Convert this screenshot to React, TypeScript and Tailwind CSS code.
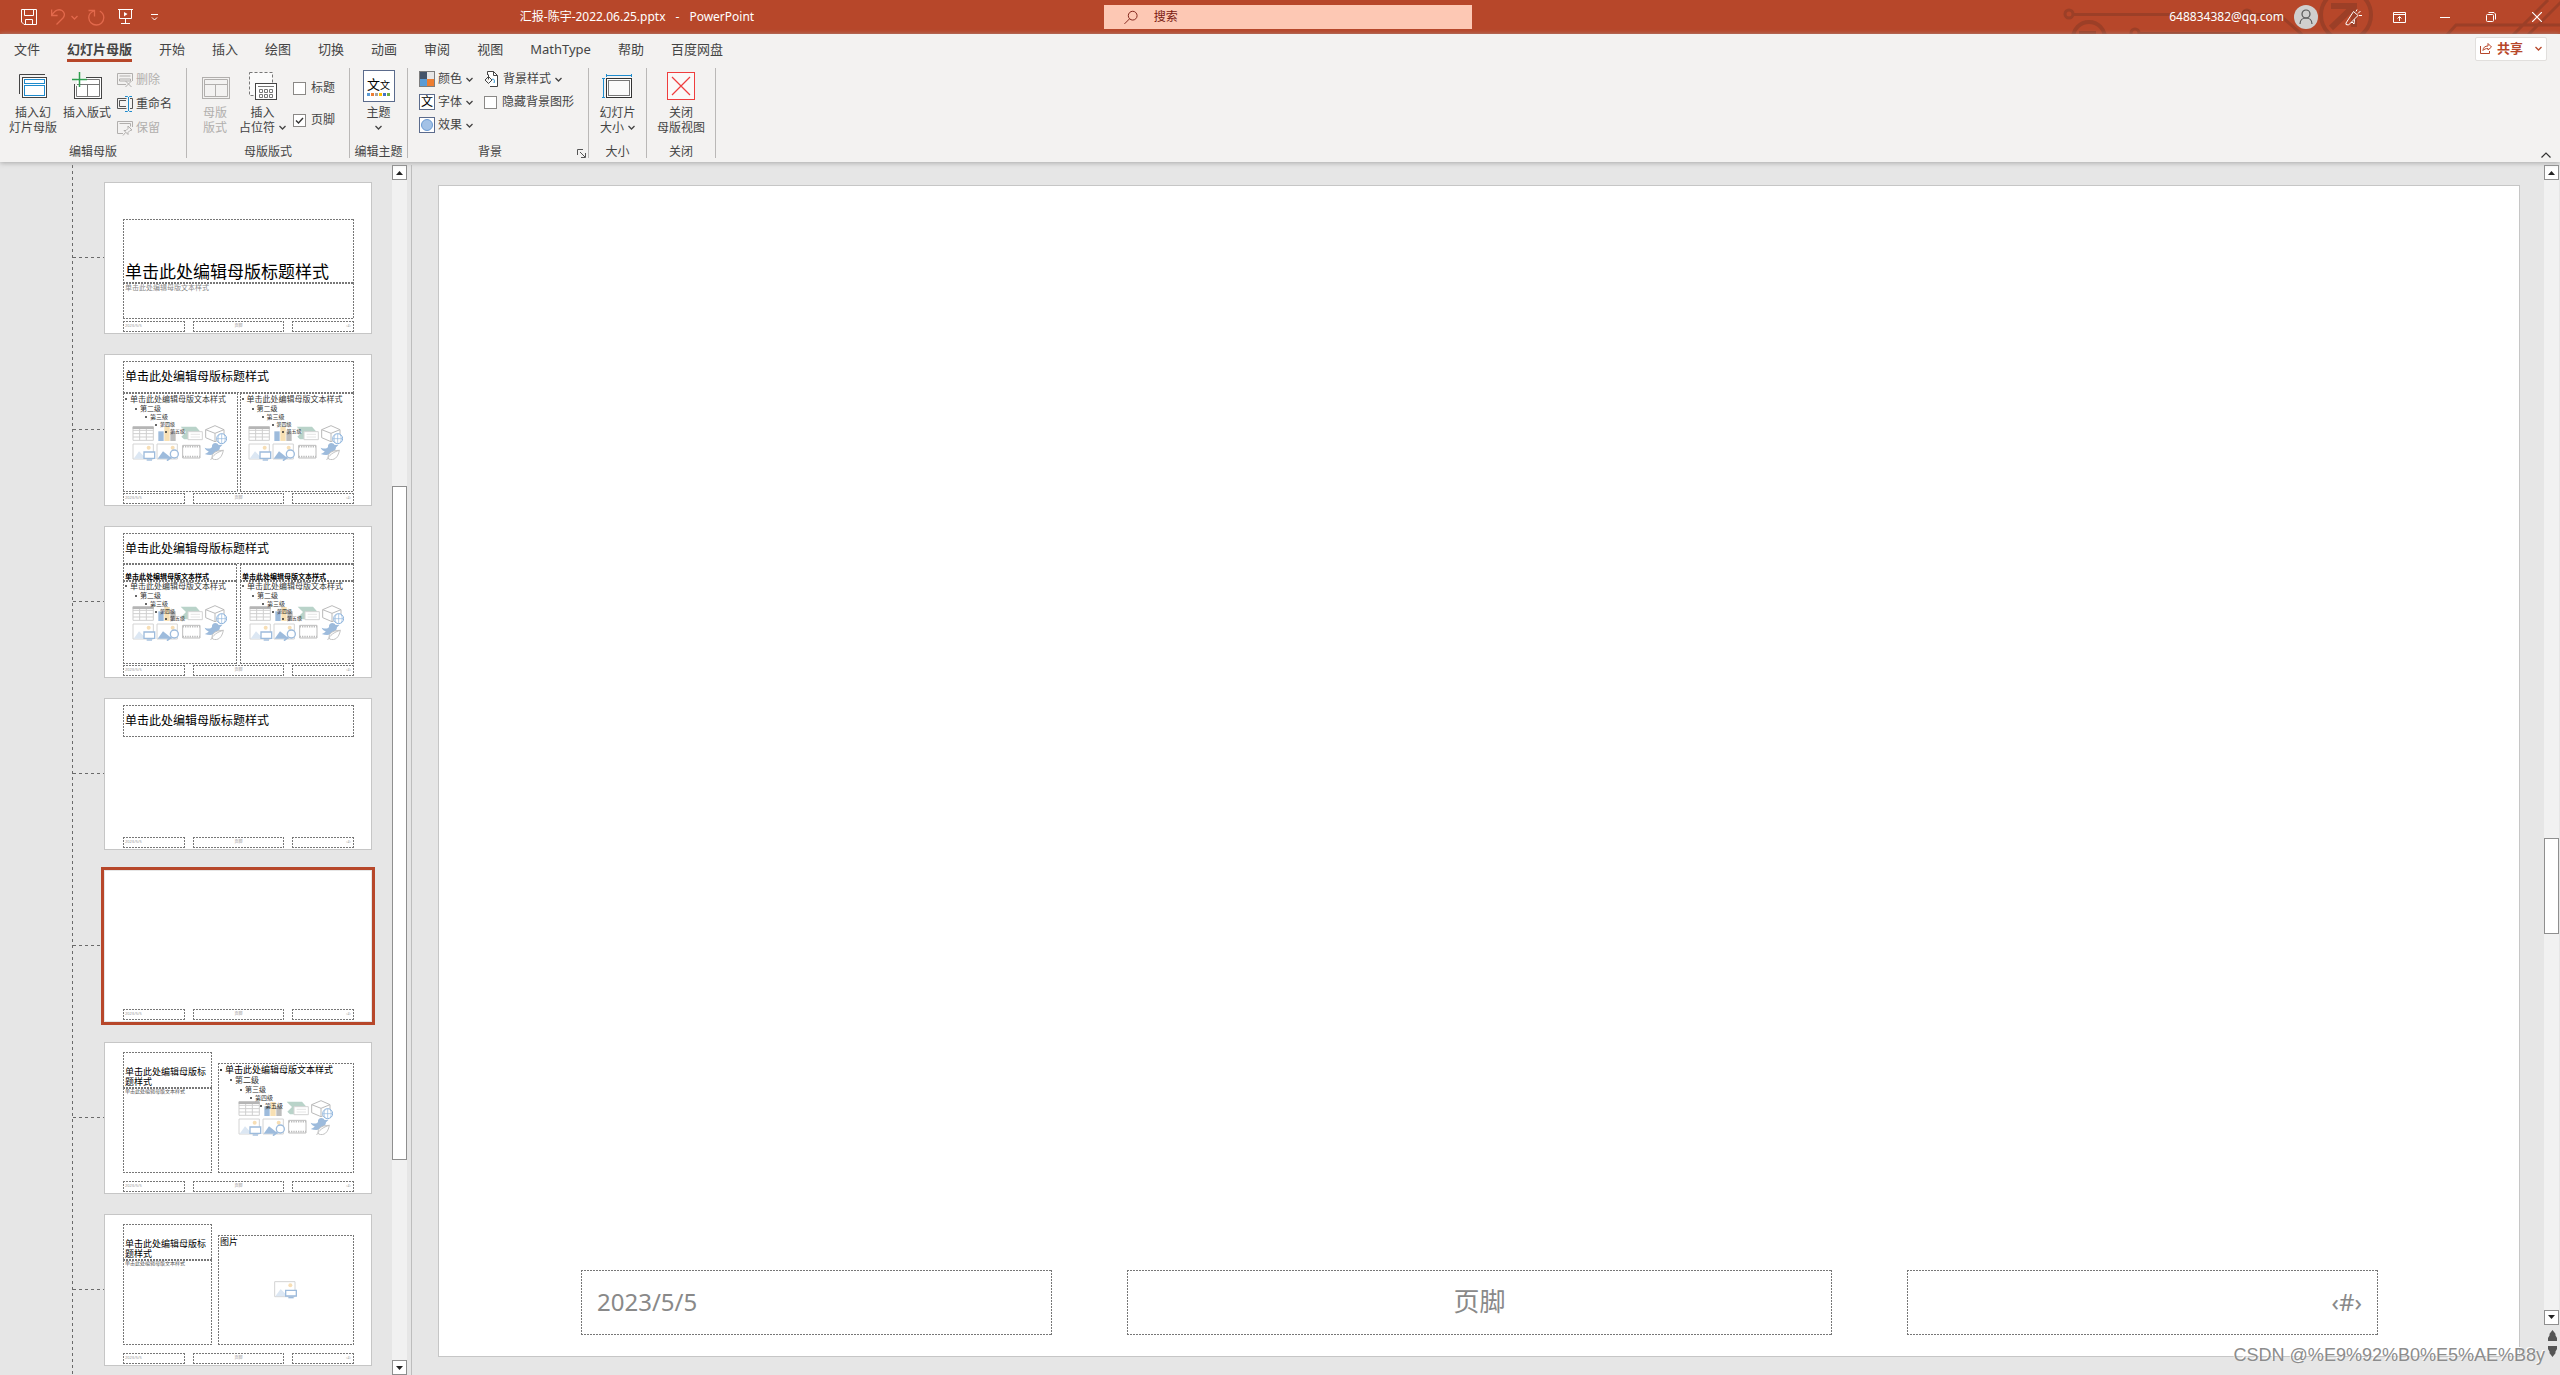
import type { ReactNode } from 'react';

const DASHED =
  '[background:repeating-linear-gradient(90deg,#777_0_2px,transparent_2px_3px)_top/100%_1px_no-repeat,repeating-linear-gradient(90deg,#777_0_2px,transparent_2px_3px)_bottom/100%_1px_no-repeat,repeating-linear-gradient(#777_0_2px,transparent_2px_3px)_left/1px_100%_no-repeat,repeating-linear-gradient(#777_0_2px,transparent_2px_3px)_right/1px_100%_no-repeat]';

const TITLE_TEXT = '单击此处编辑母版标题样式';
const BODY_TEXT = '单击此处编辑母版文本样式';

const tabs = ['文件', '幻灯片母版', '开始', '插入', '绘图', '切换', '动画', '审阅', '视图', 'MathType', '帮助', '百度网盘'];

/* ---------- small pieces ---------- */

function Chevron() {
  return (
    <svg width="7" height="5" viewBox="0 0 7 5" fill="none" stroke="currentColor" strokeWidth="1.3" className="shrink-0">
      <path d="M.5 1l3 3 3-3" />
    </svg>
  );
}

function BigButton({ icon, lines, arrow, disabled }: { icon: ReactNode; lines: string[]; arrow?: boolean; disabled?: boolean }) {
  return (
    <button disabled={disabled} className="flex shrink-0 flex-col items-center text-xs leading-[15px] whitespace-nowrap disabled:text-[#b1afad]">
      <span className="mb-px flex h-9 items-center justify-center">{icon}</span>
      {lines.map((line, i) => (
        <span key={line} className="flex h-[15px] items-center gap-1">
          {line}
          {arrow && i === lines.length - 1 && <Chevron />}
        </span>
      ))}
    </button>
  );
}

function SmallButton({ icon, label, arrow, disabled }: { icon: ReactNode; label: string; arrow?: boolean; disabled?: boolean }) {
  return (
    <button disabled={disabled} className="flex h-5 items-center gap-[3px] text-xs leading-4 whitespace-nowrap disabled:text-[#b1afad]">
      {icon}
      {label}
      {arrow && (
        <span className="pl-px">
          <Chevron />
        </span>
      )}
    </button>
  );
}

function Tick({ id, label, checked }: { id: string; label: string; checked?: boolean }) {
  return (
    <div className="flex h-5 items-center gap-[5px] text-xs leading-4 whitespace-nowrap">
      <span className="grid">
        <input
          id={id}
          type="checkbox"
          defaultChecked={checked}
          className="peer col-start-1 row-start-1 h-[13px] w-[13px] appearance-none border border-[#8a8886] bg-white"
        />
        <svg
          viewBox="0 0 13 13"
          className="pointer-events-none invisible col-start-1 row-start-1 h-[13px] w-[13px] peer-checked:visible"
          fill="none"
          stroke="#333"
          strokeWidth="1.4"
        >
          <path d="M3 6.5 5.5 9 10 4" />
        </svg>
      </span>
      <label htmlFor={id}>{label}</label>
    </div>
  );
}

function Group({ label, className, launcher, children }: { label: string; className: string; launcher?: boolean; children: ReactNode }) {
  return (
    <section className={`flex h-[90px] shrink-0 flex-col border-r border-[#bab8b7] ${className}`}>
      <div className="flex flex-1">{children}</div>
      <div className={`relative text-center text-xs leading-3 whitespace-nowrap ${launcher ? 'pr-4' : ''}`}>
        {label}
        {launcher && (
          <button aria-label="背景设置" className="absolute right-[2px] bottom-0">
            <svg width="9" height="9" viewBox="0 0 9 9" fill="none" stroke="#555">
              <path d="M.5 6V.5H6M3 3l5 5M8.5 4v4.500H4" />
            </svg>
          </button>
        )}
      </div>
    </section>
  );
}

/* ---------- ribbon icons ---------- */

function MasterIcon() {
  return (
    <svg width="28" height="24" viewBox="0 0 28 24" fill="none">
      <path d="M.5 20V.5H26" stroke="#444" />
      <rect x="3.500" y="3.500" width="24" height="20" fill="#fff" stroke="#444" />
      <rect x="5.500" y="5.500" width="20" height="4" stroke="#1e8bcd" />
      <rect x="5.500" y="11.500" width="20" height="10" stroke="#1e8bcd" />
    </svg>
  );
}

function LayoutIcon({ plus = false }: { plus?: boolean }) {
  const c = plus ? '#444' : '#b1afad';
  return (
    <svg width="30" height="28" viewBox="0 0 30 28" fill="none" stroke={c}>
      <rect x="2.500" y="5.500" width="27" height="21" fill={plus ? '#fff' : '#f3f2f1'} />
      <path d="M4.500 7.500h23v17h-23zM4.500 12.500h23M15.500 12.500v12" stroke={plus ? '#777' : c} />
      {plus && (
        <>
          <path d="M0 3h14v3H5v8H0z" fill="#f3f2f1" stroke="none" />
          <path d="M7.500 0v15M0 7.500h15" stroke="#2f9e4f" strokeWidth="1.500" />
          <path d="M2.500 12v7M14 5.500h4" />
        </>
      )}
    </svg>
  );
}

function PlaceholderIcon() {
  return (
    <svg width="28" height="28" viewBox="0 0 28 28" fill="none" stroke="#444">
      <rect x=".5" y=".5" width="23" height="23" fill="#fbfbfb" stroke="#777" strokeDasharray="3 2" />
      <rect x="6.500" y="11.500" width="21" height="16" fill="#fff" />
      <path d="M9 14.500h16" stroke="#777" />
      <path d="M10.500 17.500h3v3h-3zM15.500 17.500h3v3h-3zM20.500 17.500h3v3h-3zM10.500 22.500h3v3h-3zM15.500 22.500h3v3h-3zM20.500 22.500h3v3h-3z" stroke="#777" />
    </svg>
  );
}

function SizeIcon() {
  return (
    <svg width="30" height="24" viewBox="0 0 30 24" fill="none">
      <path d="M4.500 0v3M29.500 0v3M4.500 1.500h25M0 4.500h3M0 23.500h3M1.500 4.500v19" stroke="#1e8bcd" />
      <rect x="4.500" y="4.500" width="25" height="19" fill="#fff" stroke="#333" />
      <rect x="6.500" y="6.500" width="21" height="15" fill="#fafafa" stroke="#777" />
    </svg>
  );
}

function CloseViewIcon() {
  return (
    <svg width="28" height="28" viewBox="0 0 28 28" fill="none" stroke="#ef3e3e">
      <rect x=".5" y=".5" width="27" height="27" fill="#faf9f8" />
      <path d="m5 5 18 18M23 5 5 23" strokeWidth="1.200" />
    </svg>
  );
}

function ThemeIcon() {
  const dots = ['#5b9bd5', '#ed7d31', '#a5a5a5', '#ffc000', '#4472c4', '#70ad47'];
  return (
    <span className="flex h-8 w-8 flex-col items-center justify-end gap-px border border-[#5b6b8c] bg-white pb-[5px] text-black">
      <span className="flex items-baseline leading-[14px]">
        <span className="text-[13px]">文</span>
        <span className="text-[10px]">文</span>
      </span>
      <span className="flex gap-px">
        {dots.map((d) => (
          <span key={d} className="h-[3px] w-[3px]" style={{ background: d }} />
        ))}
      </span>
    </span>
  );
}

function DeleteIcon() {
  return (
    <svg width="16" height="16" viewBox="0 0 16 16" fill="none" stroke="#b1afad">
      <path d="M9 12.500H.5v-11h15V9M2.500 4h11M2.500 7h11v2h-11zM8.500 9l6 6M14.500 9l-6 6" />
    </svg>
  );
}

function RenameIcon() {
  return (
    <svg width="16" height="16" viewBox="0 0 16 16" fill="none">
      <path d="M9.500 12.500H.5v-10h9M13 2.500h2.500v10H13M9 4.500H2.500v6H9" stroke="#555" />
      <path d="M8 .5h2.500l1 1 1-1H15M8 15.500h2.500l1-1 1 1H15M11.500 1v14" stroke="#1e8bcd" />
    </svg>
  );
}

function PreserveIcon() {
  return (
    <svg width="16" height="16" viewBox="0 0 16 16" fill="none" stroke="#b1afad">
      <path d="M6 13.500H.5v-12h15V7M2.500 3.500h11v3" />
      <path d="m11 6 4 4-2 .5-2 2v2l-4-4h2l2-2zM8.500 12.500 6 15.500" />
    </svg>
  );
}

function ColorsIcon() {
  return (
    <span className="grid h-4 w-4 grid-cols-2 border border-[#7d7d7d]">
      <span className="bg-[#44546a]" />
      <span className="bg-[#e7e6e6]" />
      <span className="bg-[#5b9bd5]" />
      <span className="bg-[#ed7d31]" />
    </span>
  );
}

function StylesIcon() {
  return (
    <svg width="16" height="16" viewBox="0 0 16 16" fill="none" stroke="#444">
      <path d="M3.500 4V.5h6l4 4v11H6" fill="#fff" />
      <path d="M9.500.5v4h4M4.500 3.500v5M1 9l3.500-3.500L8 9l-3.500 3.500z" />
      <path d="M8 8.500c2-1 3 .5 2 3.500" stroke="#1e8bcd" />
    </svg>
  );
}

/* ---------- title bar ---------- */

function Circuit() {
  return (
    <svg className="pointer-events-none absolute inset-y-0 right-0 h-[34px] w-[520px]" viewBox="0 0 520 34" fill="none" stroke="#9c3f27" strokeWidth="3">
      <circle cx="29" cy="14" r="4" />
      <path d="M33 14.500h206l23 20" />
      <circle cx="49" cy="38" r="16" strokeWidth="4" />
      <path d="M39 33h17" strokeWidth="4" />
      <circle cx="95" cy="33" r="4" />
      <path d="M99 33.500h101" />
      <circle cx="207" cy="14" r="4" />
      <circle cx="306" cy="15" r="25" strokeWidth="4" />
      <path d="M291 6h23v21M313 7l-22 21" strokeWidth="6" />
      <path d="m407 35 9-10h104M473 35l35-35M488 35l34-34" />
    </svg>
  );
}

function TitleBar() {
  return (
    <header className="relative grid h-[34px] grid-cols-[1104fr_368fr_1088fr] items-center bg-[#b7472a] text-xs text-white">
      <Circuit />
      <div className="flex items-center pl-[21px]">
        <button aria-label="保存">
          <svg width="16" height="16" viewBox="0 0 16 16" fill="none" stroke="#fff">
            <path d="M.5.5h15v15H3L.5 13zM3.500.5v6h9v-6M4.500 15.500v-5h7v5" />
          </svg>
        </button>
        <button aria-label="撤消" className="ml-[14px] flex items-center gap-[6px] text-[#e2694c]">
          <svg width="14" height="16" viewBox="0 0 14 16" fill="none" stroke="currentColor" strokeWidth="1.300">
            <path d="M.6.500v6h6M.6 6.500C4 1 8 0 11 1.500c3 2 3 5 1 7.500L5.500 15.500" />
          </svg>
          <Chevron />
        </button>
        <button aria-label="恢复" className="ml-[10px] text-[#e2694c]">
          <svg width="17" height="17" viewBox="0 0 17 17" fill="none" stroke="currentColor" strokeWidth="1.300">
            <path d="M.5 1.500h6v6M6 2C2 3.500.6 6 .8 9c.3 4 3.500 7 7.500 7s7.500-3 7.500-7.500c0-3-1.500-5-4-6.500" />
          </svg>
        </button>
        <button aria-label="从头开始" className="ml-[13px]">
          <svg width="15" height="16" viewBox="0 0 15 16" fill="none" stroke="#fff">
            <path d="M0 .5h15M1.500.5v9h12v-9M7.500 9.500v5M3 14.500h9" />
            <path d="M6 3v4.500L9.500 5z" fill="#fff" stroke="none" />
          </svg>
        </button>
        <button aria-label="自定义快速访问工具栏" className="ml-[18px]">
          <svg width="7" height="7" viewBox="0 0 7 7" fill="none" stroke="#fff">
            <path d="M0 .5h7M1 3.500 3.500 6 6 3.500" />
          </svg>
        </button>
        <h1 className="flex flex-1 justify-center pl-3 leading-4 whitespace-nowrap">
          汇报-陈宇-2022.06.25.pptx
          <span className="px-[10px]">-</span>
          PowerPoint
        </h1>
      </div>
      <label className="flex h-6 items-center gap-4 bg-[#fdc8b4] pl-5 text-[#7a1a12]">
        <svg width="15" height="15" viewBox="0 0 15 15" fill="none" stroke="currentColor">
          <circle cx="9.500" cy="5.500" r="4.800" />
          <path d="M6 9 .5 14.500" />
        </svg>
        <input aria-label="搜索" placeholder="搜索" className="w-full bg-transparent leading-4 outline-none placeholder:text-[#7a1a12]" />
      </label>
      <div className="relative flex items-center justify-end">
        <button className="flex items-center gap-[10px] leading-4">
          648834382@qq.com
          <svg width="24" height="24" viewBox="0 0 24 24" fill="none" stroke="#555" strokeWidth="1.200">
            <circle cx="12" cy="12" r="12" fill="#d0cfce" stroke="none" />
            <circle cx="12" cy="9" r="4" />
            <path d="M6 19c0-8 12-8 12 0" />
          </svg>
        </button>
        <button aria-label="即将推出的功能" className="ml-3 flex w-[46px] justify-center">
          <svg width="17" height="17" viewBox="0 0 17 17" fill="none" stroke="#fff">
            <path d="m8.500 2.500 4.500 4-9.500 9.500-2.500-.500L1 14zM6 14l1-1 2 2 .5-4.500M11 2.500l1-2M13 4.500l2.500-2.500M14 6.500h3" />
          </svg>
        </button>
        <button aria-label="功能区显示选项" className="flex w-[46px] justify-center">
          <svg width="13" height="11" viewBox="0 0 13 11" fill="none" stroke="#fff">
            <path d="M.5.5h12v10H.5zM.5 2.500h12M6.500 9V4.500M4.500 6.500l2-2 2 2" />
          </svg>
        </button>
        <button aria-label="最小化" className="flex w-[46px] justify-center">
          <span className="h-px w-[10px] bg-white" />
        </button>
        <button aria-label="还原" className="flex w-[46px] justify-center">
          <svg width="10" height="10" viewBox="0 0 10 10" fill="none" stroke="#fff">
            <rect x=".5" y="2.500" width="7" height="7" rx="1" />
            <path d="M2.500.5H8L9.500 2v5.500" />
          </svg>
        </button>
        <button aria-label="关闭" className="flex w-[46px] justify-center">
          <svg width="10" height="10" viewBox="0 0 10 10" fill="none" stroke="#fff" strokeWidth="1.200">
            <path d="m0 0 10 10M10 0 0 10" />
          </svg>
        </button>
      </div>
    </header>
  );
}

/* ---------- ribbon ---------- */

function Ribbon() {
  return (
    <div className="relative z-10 h-32 bg-[#f3f2f1] text-[#444] shadow-[0_1px_5px_#a8a8a8]">
      <div className="flex h-[34px] justify-between pr-[13px] pl-[14px]">
        <nav className="flex gap-[27px] text-[13px] leading-4 whitespace-nowrap">
          {tabs.map((t) => (
            <button
              key={t}
              className={t === '幻灯片母版' ? 'mb-[6px] border-b-[3px] border-[#b7472a] pt-1 font-bold' : 'mb-[9px] pt-1'}
            >
              {t}
            </button>
          ))}
        </nav>
        <button className="mt-[3px] flex h-6 w-[72px] items-center justify-center gap-[5px] rounded-xs border border-[#e1dfdd] bg-white pb-[2px] text-[13px] leading-4 font-bold text-[#b7472a]">
          <svg width="12" height="12" viewBox="0 0 12 12" fill="none" stroke="currentColor">
            <path d="M.5 4v7.500h9V9M3 8.500c0-3 2-4.500 5-4.500V1.500L11.500 5 8 8V6.500C6 6.500 4 7 3 8.500z" />
          </svg>
          共享
          <span className="pl-[7px]">
            <Chevron />
          </span>
        </button>
      </div>
      <div className="flex">
        <Group label="编辑母版" className="w-[187px]">
          <div className="flex w-full pl-[9px]">
            <BigButton icon={<MasterIcon />} lines={['插入幻', '灯片母版']} />
            <div className="ml-[6px] flex">
              <BigButton icon={<LayoutIcon plus />} lines={['插入版式']} />
            </div>
            <div className="ml-[6px] flex flex-col gap-1 pt-[2px]">
              <SmallButton icon={<DeleteIcon />} label="删除" disabled />
              <SmallButton icon={<RenameIcon />} label="重命名" />
              <SmallButton icon={<PreserveIcon />} label="保留" disabled />
            </div>
          </div>
        </Group>
        <Group label="母版版式" className="w-[163px]">
          <div className="flex pl-[13px]">
            <BigButton icon={<LayoutIcon />} lines={['母版', '版式']} disabled />
            <div className="ml-[9px] flex">
              <BigButton icon={<PlaceholderIcon />} lines={['插入', '占位符']} arrow />
            </div>
            <div className="ml-[7px] flex flex-col gap-3 pt-[10px]">
              <Tick id="show-title" label="标题" />
              <Tick id="show-footer" label="页脚" checked />
            </div>
          </div>
        </Group>
        <Group label="编辑主题" className="w-[58px]">
          <div className="flex flex-1 justify-center">
            <button className="flex flex-col items-center text-xs leading-[15px]">
              <span className="mb-px flex h-9 items-center">
                <ThemeIcon />
              </span>
              主题
              <span className="flex h-[15px] items-center">
                <Chevron />
              </span>
            </button>
          </div>
        </Group>
        <Group label="背景" className="w-[181px]" launcher>
          <div className="flex flex-col gap-[3px] pt-px pl-[11px]">
            <SmallButton icon={<ColorsIcon />} label="颜色" arrow />
            <SmallButton
              icon={<span className="flex h-4 w-4 items-center justify-center border border-[#5b6b8c] bg-white text-black">文</span>}
              label="字体"
              arrow
            />
            <SmallButton
              icon={
                <span className="flex h-4 w-4 items-center justify-center border border-[#5b6b8c] bg-white">
                  <span className="h-3 w-3 rounded-full border border-[#6a9bd3] bg-[#a3c2e6]" />
                </span>
              }
              label="效果"
              arrow
            />
          </div>
          <div className="ml-[11px] flex flex-col gap-[3px] pt-px">
            <SmallButton icon={<StylesIcon />} label="背景样式" arrow />
            <Tick id="hide-bg" label="隐藏背景图形" />
          </div>
        </Group>
        <Group label="大小" className="w-[58px]">
          <div className="flex flex-1 justify-center">
            <BigButton icon={<SizeIcon />} lines={['幻灯片', '大小']} arrow />
          </div>
        </Group>
        <Group label="关闭" className="w-[69px]">
          <div className="flex flex-1 justify-center">
            <BigButton icon={<CloseViewIcon />} lines={['关闭', '母版视图']} />
          </div>
        </Group>
        <button aria-label="折叠功能区" className="mr-[9px] ml-auto self-end">
          <svg width="10" height="6" viewBox="0 0 10 6" fill="none" stroke="#333" strokeWidth="1.200">
            <path d="m.5 5.500 4.500-4.500 4.500 4.500" />
          </svg>
        </button>
      </div>
    </div>
  );
}

/* ---------- slide thumbnails ---------- */

function Box({ className = '', children }: { className?: string; children?: ReactNode }) {
  return <span className={`relative flex flex-col overflow-hidden text-left whitespace-nowrap ${DASHED} ${className}`}>{children}</span>;
}

function PictureGlyph() {
  return (
    <>
      <path d="M2 2h61v45H2z" fill="#fff" stroke="#d4d4d4" strokeWidth="3" />
      <circle cx="49" cy="13" r="6" fill="#f7deb5" />
    </>
  );
}

function ContentIcons() {
  return (
    <svg width="95" height="36" viewBox="0 0 285 108" fill="none">
      {/* table, chart */}
      <path d="M3 6h61v40H3zM3 26h61M3 36h61M23 12v34M43 12v34M3 16h61" fill="#fff" stroke="#cfcfcf" strokeWidth="3" />
      <path d="M2 4h63v8H2z" fill="#b5b5b5" />
      <path d="M79 19h16v29H79z" fill="#9dbbdc" />
      <path d="M97 6h16v42H97z" fill="#f8e0b3" />
      <path d="M115 19h16v29h-16z" fill="#bdbdbd" />
      {/* smart art, 3D model */}
      <path d="M146 5h46l12 14-10 24h-38l-8-8 14-14z" fill="#b9d3c9" />
      <path d="M168 20h43v24h-43z" fill="#fff" stroke="#d4d4d4" strokeWidth="3" />
      <path d="M176 28h28M176 36h28" stroke="#d9d9d9" strokeWidth="2" />
      <path d="m221 14 28-12 27 12v24l-27 12-28-12zM221 14l28 11 27-11M249 25v24" fill="#fff" stroke="#bababa" strokeWidth="3" />
      <circle cx="269" cy="41" r="15" fill="#fff" stroke="#8fb5dd" strokeWidth="3" />
      <path d="M254 41h30M269 26v30M262 28c-5 8-5 18 0 26M276 28c5 8 5 18 0 26" stroke="#8fb5dd" strokeWidth="2" />
      {/* pictures */}
      <g transform="translate(1 55)">
        <PictureGlyph />
        <path d="m4 46 16-22 20 20v2z" fill="#dce7f3" />
        <path d="M35 26h32v19H35z" fill="#fff" stroke="#9dbbdc" strokeWidth="4" />
        <path d="M43 50h16" stroke="#9dbbdc" strokeWidth="4" />
      </g>
      <g transform="translate(73 55)">
        <PictureGlyph />
        <path d="m4 46 16-22 28 22z" fill="#9dbbdc" />
        <circle cx="54" cy="32" r="12" fill="#fff" stroke="#9dbbdc" strokeWidth="4" />
        <path d="M45 41 32 52" stroke="#9dbbdc" strokeWidth="5" />
      </g>
      {/* video, icons */}
      <path d="M152 61h52v38h-52z" fill="#fff" stroke="#bdbdbd" strokeWidth="3" />
      <path d="M152 65h52M152 95h52" stroke="#bdbdbd" strokeWidth="5" strokeDasharray="4 3" />
      <path d="M218 68c10 4 18 4 22-2-2-14 16-16 20-6l12-1-8 8c-2 18-22 28-46 20 6-2 10-4 12-8-6-2-10-6-12-11z" fill="#9dbbdc" />
      <path d="M236 105c6-14 20-24 38-29-4 22-16 32-32 26-6-12 4-26 32-26" fill="#fff" stroke="#c4c4c4" strokeWidth="3" />
    </svg>
  );
}

function Overlay({ children }: { children: ReactNode }) {
  return <span className="absolute inset-0 flex items-center justify-center pr-[2px]">{children}</span>;
}

function BodyLevels({ large = false }: { large?: boolean }) {
  const levels = large
    ? [
        { text: BODY_TEXT, cls: 'h-[11px] text-[9px] text-black' },
        { text: '第二级', cls: 'h-[10px] pl-[10px] text-[8px]' },
        { text: '第三级', cls: 'h-[9px] pl-5 text-[7px]' },
        { text: '第四级', cls: 'h-2 pl-[30px] text-[6px]' },
        { text: '第五级', cls: 'h-[7px] pl-10 text-[6px]' },
      ]
    : [
        { text: BODY_TEXT, cls: 'h-[10px] text-[8px]' },
        { text: '第二级', cls: 'h-[9px] pl-[10px] text-[7px]' },
        { text: '第三级', cls: 'h-2 pl-5 text-[6px]' },
        { text: '第四级', cls: 'h-[7px] pl-[30px] text-[5px]' },
        { text: '第五级', cls: 'h-[7px] pl-10 text-[5px]' },
      ];
  return (
    <span className="relative z-10 flex flex-col pl-[2px] text-[#333]">
      {levels.map((l) => (
        <span key={l.text} className={`flex items-center gap-[3px] leading-none ${l.cls}`}>
          <span className="h-[2px] w-[2px] rounded-full bg-current" />
          {l.text}
        </span>
      ))}
    </span>
  );
}

function ThumbTitle({ height = 'h-8' }: { height?: string }) {
  return <Box className={`justify-center pl-[2px] text-xs leading-none text-black ${height}`}>{TITLE_TEXT}</Box>;
}

function ContentBox({ large, className = 'pt-px' }: { large?: boolean; className?: string }) {
  return (
    <Box className={`flex-1 ${className}`}>
      <Overlay>
        <ContentIcons />
      </Overlay>
      <BodyLevels large={large} />
    </Box>
  );
}

function Caption() {
  return (
    <span className="flex w-[89px] flex-col">
      <Box className="h-9 justify-end pb-px pl-[2px] text-[9px] leading-[10px] text-black">
        <span>单击此处编辑母版标</span>
        <span>题样式</span>
      </Box>
      <Box className="flex-1 pl-[2px] text-[5px] leading-[7px] text-[#555]">{BODY_TEXT}</Box>
    </span>
  );
}

const layouts: { name: string; body: ReactNode }[] = [
  {
    name: '节标题',
    body: (
      <span className="flex flex-col pt-9">
        <Box className="h-16 justify-end pb-px pl-[2px] text-[17px] leading-5 text-black">{TITLE_TEXT}</Box>
        <Box className="h-9 pt-px pl-[2px] text-[7px] leading-2 text-[#888]">{BODY_TEXT}</Box>
      </span>
    ),
  },
  {
    name: '两栏内容',
    body: (
      <span className="flex flex-1 flex-col pt-[6px] pb-px">
        <ThumbTitle />
        <span className="flex flex-1 gap-[2px]">
          <ContentBox />
          <ContentBox />
        </span>
      </span>
    ),
  },
  {
    name: '比较',
    body: (
      <span className="flex flex-1 flex-col pt-[6px] pb-px">
        <ThumbTitle height="h-[31px]" />
        <span className="flex flex-1 gap-[3px]">
          {[0, 1].map((i) => (
            <span key={i} className="flex flex-1 flex-col">
              <Box className="h-[17px] justify-end pl-[2px] text-[7px] leading-2 font-bold text-black">{BODY_TEXT}</Box>
              <ContentBox className="pt-0" />
            </span>
          ))}
        </span>
      </span>
    ),
  },
  {
    name: '仅标题',
    body: (
      <span className="flex flex-col pt-[6px]">
        <ThumbTitle />
      </span>
    ),
  },
  { name: '空白', body: null },
  {
    name: '内容与标题',
    body: (
      <span className="flex flex-1 gap-[6px] pt-[9px] pb-2">
        <Caption />
        <span className="flex flex-1 flex-col pt-[11px]">
          <ContentBox large />
        </span>
      </span>
    ),
  },
  {
    name: '图片与标题',
    body: (
      <span className="flex flex-1 gap-[6px] pt-[9px] pb-2">
        <Caption />
        <span className="flex flex-1 flex-col pt-[11px]">
          <Box className="flex-1 pt-[2px] pl-[2px] text-[9px] leading-[10px] text-black">
            图片
            <Overlay>
              <svg width="23" height="18" viewBox="0 0 69 54" fill="none">
                <PictureGlyph />
                <path d="m4 46 16-22 20 20v2z" fill="#dce7f3" />
                <path d="M35 28h32v17H35z" fill="#fff" stroke="#9dbbdc" strokeWidth="4" />
                <path d="M43 50h16" stroke="#9dbbdc" strokeWidth="4" />
              </svg>
            </Overlay>
          </Box>
        </span>
      </span>
    ),
  },
];

function Thumb({ name, body, selected }: { name: string; body: ReactNode; selected: boolean }) {
  return (
    <li className="flex items-start">
      <span className="mt-[75px] h-px w-[31px] shrink-0 bg-[repeating-linear-gradient(90deg,#6a6a6a_0_3px,transparent_3px_6px)]" />
      <button
        aria-label={name}
        className={`flex h-[152px] w-[268px] shrink-0 flex-col border bg-white pr-[17px] pb-px pl-[18px] ${
          selected ? 'border-[#e6e6e6] outline-[3px] outline-[#b7472a]' : 'border-[#c6c6c6]'
        }`}
      >
        {body}
        <span className="mt-auto grid grid-cols-[62fr_91fr_62fr] gap-2 text-[4px] leading-[9px] text-[#999]">
          <Box className="h-[11px] pl-[2px]">2023/5/5</Box>
          <Box className="h-[11px] items-center">页脚</Box>
          <Box className="h-[11px] items-end pr-[3px]">‹#›</Box>
        </span>
      </button>
    </li>
  );
}

/* ---------- scroll bars ---------- */

function ArrowButton({ up = false }: { up?: boolean }) {
  return (
    <button aria-label={up ? '向上滚动' : '向下滚动'} className="flex h-[15px] w-full items-center justify-center border border-[#8f8f8f] bg-white">
      <svg width="7" height="4" viewBox="0 0 7 4" fill="#222">
        <path d={up ? 'M3.500 0 7 4H0z' : 'M3.500 4 0 0h7z'} />
      </svg>
    </button>
  );
}

function Scrollbar({ before, size, after }: { before: number; size: number; after: number }) {
  return (
    <div className="flex w-[15px] flex-1 flex-col bg-[#f1f1f1]">
      <ArrowButton up />
      <div style={{ flexGrow: before }} />
      <div className="border border-[#8f8f8f] bg-white" style={{ flexGrow: size }} />
      <div style={{ flexGrow: after }} />
      <ArrowButton />
    </div>
  );
}

function PageArrows({ up = false }: { up?: boolean }) {
  return (
    <button aria-label={up ? '上一张幻灯片' : '下一张幻灯片'} className="flex justify-center">
      <svg width="9" height="11" viewBox="0 0 9 11" fill="#555">
        <path d={up ? 'M4.500 0 8 4.500H7L9 8v3H0V8l2-3.500H1z' : 'M4.500 11 1 6.500h1L0 3V0h9v3L7 6.500h1z'} />
      </svg>
    </button>
  );
}

export default function App() {
  return (
    <div className="relative flex h-screen flex-col overflow-hidden bg-[#e6e6e6] font-['Noto_Sans','Noto_Sans_CJK_SC',sans-serif]">
      <TitleBar />
      <Ribbon />
      <div className="flex min-h-0 flex-1 pt-[3px]">
        <aside className="flex w-[412px] shrink-0 border-r border-[#bdbdbd] pr-1 pl-[72px]">
          <div className="w-px bg-[repeating-linear-gradient(#6a6a6a_0_3px,transparent_3px_6px)]" />
          <ul className="flex flex-1 flex-col gap-5 overflow-hidden pt-[17px]">
            {layouts.map((l) => (
              <Thumb key={l.name} name={l.name} body={l.body} selected={l.name === '空白'} />
            ))}
          </ul>
          <div className="flex flex-col">
            <Scrollbar before={307} size={673} after={201} />
          </div>
        </aside>
        <main className="flex flex-1 pt-5 pr-6 pb-[18px] pl-[26px]">
          <div className="flex flex-1 flex-col justify-end border border-[#c6c6c6] bg-white pr-[141px] pb-[21px] pl-[142px]">
            <div className="grid grid-cols-[471fr_705fr_471fr] gap-[75px] text-2xl text-[#898989]">
              <div className={`flex h-[65px] items-center px-4 pb-[2px] ${DASHED}`}>2023/5/5</div>
              <div className={`flex h-[65px] items-center justify-center px-4 pb-[2px] text-[26px] ${DASHED}`}>页脚</div>
              <div className={`flex h-[65px] items-center justify-end px-4 pb-[2px] ${DASHED}`}>‹#›</div>
            </div>
          </div>
        </main>
        <div className="flex w-4 flex-col gap-[5px] pb-[18px]">
          <Scrollbar before={659} size={94} after={377} />
          <PageArrows up />
          <PageArrows />
        </div>
      </div>
      <p className="pointer-events-none absolute right-[15px] bottom-2 font-['Liberation_Sans',sans-serif] text-lg leading-6 text-[#8c8c8c] [text-shadow:-1px_-1px_0_#fff]">
        CSDN @%E9%92%B0%E5%AE%B8y
      </p>
    </div>
  );
}
